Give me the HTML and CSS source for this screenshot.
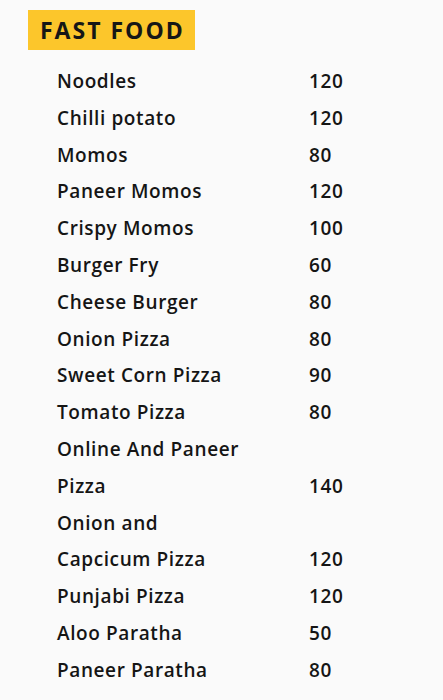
FILE: index.html
```html
<!DOCTYPE html>
<html lang="en">
<head>
    <meta charset="UTF-8">
    <meta name="viewport" content="width=device-width, initial-scale=1.0">
    <title>Fast Food Menu</title>
    <link rel="stylesheet" href="styles.css">
</head>
<body>
    <div class="menu">
        <h1 class="menu-title">FAST FOOD</h1>

        <ul class="menu-list">
            <li class="menu-item"><span class="name">Noodles</span><span class="price">120</span></li>
            <li class="menu-item"><span class="name">Chilli potato</span><span class="price">120</span></li>
            <li class="menu-item"><span class="name">Momos</span><span class="price">80</span></li>
            <li class="menu-item"><span class="name">Paneer Momos</span><span class="price">120</span></li>
            <li class="menu-item"><span class="name">Crispy Momos</span><span class="price">100</span></li>
            <li class="menu-item"><span class="name">Burger Fry</span><span class="price">60</span></li>
            <li class="menu-item"><span class="name">Cheese Burger</span><span class="price">80</span></li>
            <li class="menu-item"><span class="name">Onion Pizza</span><span class="price">80</span></li>
            <li class="menu-item"><span class="name">Sweet Corn Pizza</span><span class="price">90</span></li>
            <li class="menu-item"><span class="name">Tomato Pizza</span><span class="price">80</span></li>
            <li class="menu-item"><span class="name">Online And Paneer Pizza</span><span class="price">140</span></li>
            <li class="menu-item"><span class="name">Onion and Capcicum Pizza</span><span class="price">120</span></li>
            <li class="menu-item"><span class="name">Punjabi Pizza</span><span class="price">120</span></li>
            <li class="menu-item"><span class="name">Aloo Paratha</span><span class="price">50</span></li>
            <li class="menu-item"><span class="name">Paneer Paratha</span><span class="price">80</span></li>
        </ul>
    </div>
</body>
</html>
```

FILE: styles.css
```css
body {
    margin: 0;
    background-color: #fafafa;
    font-family: "Open Sans", Arial, sans-serif;
    color: #151515;
}
.menu {
    padding: 10px 0 0 28px;
}
.menu-title {
    display: inline-block;
    margin: 0;
    padding: 0 10px 0 12px;
    height: 40px;
    line-height: 40px;
    background-color: #fcc62b;
    font-size: 23px;
    font-weight: 700;
    letter-spacing: 2px;
    color: #161616;
}
.menu-list {
    list-style: none;
    margin: 13px 0 0;
    padding: 0 0 0 29px;
}
.menu-item {
    display: grid;
    grid-template-columns: 192px auto;
    column-gap: 60px;
    align-items: end;
    font-size: 19px;
    font-weight: 600;
    line-height: 36.8px;
    letter-spacing: 0.6px;
}
```
